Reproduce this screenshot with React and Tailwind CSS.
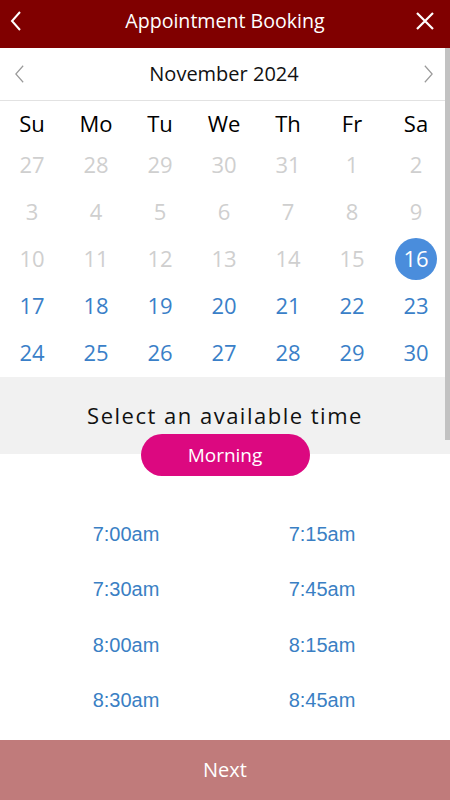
import React, { useState } from "react";

const weekdays = ["Su", "Mo", "Tu", "We", "Th", "Fr", "Sa"];

const weeks = [
  [27, 28, 29, 30, 31, 1, 2],
  [3, 4, 5, 6, 7, 8, 9],
  [10, 11, 12, 13, 14, 15, 16],
  [17, 18, 19, 20, 21, 22, 23],
  [24, 25, 26, 27, 28, 29, 30],
];

const times = [
  "7:00am", "7:15am",
  "7:30am", "7:45am",
  "8:00am", "8:15am",
  "8:30am", "8:45am",
];

const Chevron = ({ dir = "left", className }) => (
  <svg viewBox="0 0 12 20" className={className} fill="none" stroke="currentColor">
    {dir === "left" ? <path d="M10 1 L2 10 L10 19" /> : <path d="M2 1 L10 10 L2 19" />}
  </svg>
);

const App = () => {
  const [selected, setSelected] = useState(16);
  const [slot, setSlot] = useState(null);

  return (
    <div
      className="relative flex flex-col h-[800px] w-[450px] bg-white overflow-hidden"
      style={{ fontFamily: '"Open Sans", "Noto Sans", sans-serif' }}
    >
      {/* header */}
      <div className="flex items-center h-[48px] pb-[6px] bg-[#800000] text-white px-[10px]">
        <div className="w-[40px]">
          <Chevron className="w-[12px] h-[20px] stroke-[2]" />
        </div>
        <h1 className="flex-1 text-center text-[19.6px] leading-none">Appointment Booking</h1>
        <div className="w-[40px] flex justify-end">
          <svg viewBox="0 0 18 18" className="w-[18px] h-[18px] mr-[6px]" stroke="currentColor" strokeWidth="2.2">
            <path d="M1 1 L17 17 M17 1 L1 17" />
          </svg>
        </div>
      </div>

      {/* month */}
      <div className="flex items-center justify-between h-[53px] px-[14px] pr-[16px] border-b border-[#e2e2e2]">
        <Chevron className="w-[11px] h-[20px] text-[#9a9a9a] stroke-[1.3]" />
        <span className="text-[20px] text-[#111]">November 2024</span>
        <Chevron dir="right" className="w-[11px] h-[20px] text-[#9a9a9a] stroke-[1.3]" />
      </div>

      {/* calendar */}
      <div className="pr-[2px]">
        <div className="grid grid-cols-7 h-[40px] pt-[4px] items-center text-[22px] text-black">
          {weekdays.map((d) => (
            <div key={d} className="text-center">{d}</div>
          ))}
        </div>
        {weeks.map((week, wi) => (
          <div key={wi} className="grid grid-cols-7 h-[47px] items-center text-[22px]">
            {week.map((d, di) => {
              const active = wi >= 2 && (wi > 2 || d === 16);
              const isSel = active && d === selected;
              return (
                <div key={di} className="flex justify-center">
                  {isSel ? (
                    <span className="flex items-center justify-center w-[42px] h-[42px] rounded-full bg-[#4a8ddc] text-white">
                      {d}
                    </span>
                  ) : (
                    <span
                      onClick={() => active && setSelected(d)}
                      className={active ? "text-[#3a7fc8]" : "text-[#cfcfcf]"}
                    >
                      {d}
                    </span>
                  )}
                </div>
              );
            })}
          </div>
        ))}
      </div>

      {/* time header */}
      <div className="flex flex-col items-center bg-[#f1f1f1] mt-[1px] pt-[23px]">
        <p className="text-[22px] leading-[30px] tracking-[1.5px] text-[#111]">Select an available time</p>
        <button className="relative z-10 mt-[4px] -mb-[22px] w-[169px] h-[42px] rounded-full bg-[#dc0880] text-white text-[19px]">
          Morning
        </button>
      </div>

      {/* slots */}
      <div
        className="grid grid-cols-2 pt-[52px] pl-[28px] pr-[30px] text-[20px] text-[#3a7fc4]"
        style={{ fontFamily: '"Liberation Sans", Arial, sans-serif' }}
      >
        {times.map((t) => (
          <button
            key={t}
            onClick={() => setSlot(t)}
            className={`h-[55.5px] flex items-center justify-center ${slot === t ? "underline" : ""}`}
          >
            {t}
          </button>
        ))}
      </div>

      <button className="mt-auto h-[60px] w-full bg-[#c07b7b] text-white text-[20px]">Next</button>

      {/* scrollbar */}
      <div className="absolute right-0 top-[48px] w-[5px] h-[392px] bg-[#c2c2c2]" />
    </div>
  );
};

export default App;
